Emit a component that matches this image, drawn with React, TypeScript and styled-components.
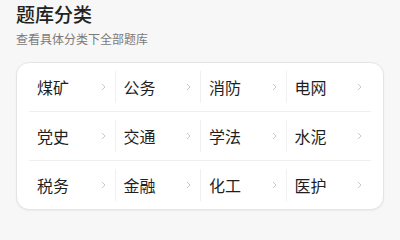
import * as React from "react";
import styled, { createGlobalStyle } from "styled-components";

const categories = [
  ["煤矿", "公务", "消防", "电网"],
  ["党史", "交通", "学法", "水泥"],
  ["税务", "金融", "化工", "医护"],
];

export default function App() {
  return (
    <>
      <GlobalStyle />
      <Page>
        <Title>题库分类</Title>
        <Subtitle>查看具体分类下全部题库</Subtitle>
        <Card>
          {categories.map((row, i) => (
            <Row key={i} first={i === 0}>
              {row.map((name, j) => (
                <Cell key={name} first={j === 0}>
                  <Name>{name}</Name>
                  <Chevron viewBox="0 0 5 8">
                    <path d="M1 1l3 3-3 3" />
                  </Chevron>
                </Cell>
              ))}
            </Row>
          ))}
        </Card>
      </Page>
    </>
  );
}

const GlobalStyle = createGlobalStyle`
  body {
    margin: 0;
    background: #f7f7f7;
    font-family: "Noto Sans CJK SC", "Noto Sans", sans-serif;
  }
`;

const Page = styled.div`
  width: 400px;
  height: 222px;
  overflow: hidden;
  padding: 3px 16px 0;
  box-sizing: border-box;
  background: #f7f7f7;
`;

const Title = styled.div`
  font-size: 19px;
  font-weight: 500;
  line-height: 22px;
  color: #222;
`;

const Subtitle = styled.div`
  margin-top: 6px;
  font-size: 12px;
  line-height: 16px;
  color: #7a7a7a;
`;

const Card = styled.div`
  margin-top: 15px;
  padding: 0 12px;
  background: #fff;
  border: 1px solid #e4e4e4;
  border-radius: 13px;
  box-shadow: 0 1px 2px rgba(0, 0, 0, 0.05);
`;

const Row = styled.div<{ first: boolean }>`
  display: grid;
  grid-template-columns: repeat(4, 1fr);
  height: 48px;
  border-top: ${(p) => (p.first ? "none" : "1px solid #efefef")};
`;

const Cell = styled.div<{ first: boolean }>`
  position: relative;
  display: flex;
  align-items: center;
  justify-content: space-between;
  padding: 0 9px 0 ${(p) => (p.first ? "8px" : "9px")};

  &::before {
    content: "";
    display: ${(p) => (p.first ? "none" : "block")};
    position: absolute;
    left: 0;
    top: 8px;
    bottom: 8px;
    width: 1px;
    background: #f0f0f0;
  }
`;

const Name = styled.span`
  font-size: 16px;
  color: #1f1f1f;
`;

const Chevron = styled.svg`
  width: 5px;
  height: 8px;
  fill: none;
  stroke: #c8c8c8;
  stroke-width: 1;
`;
